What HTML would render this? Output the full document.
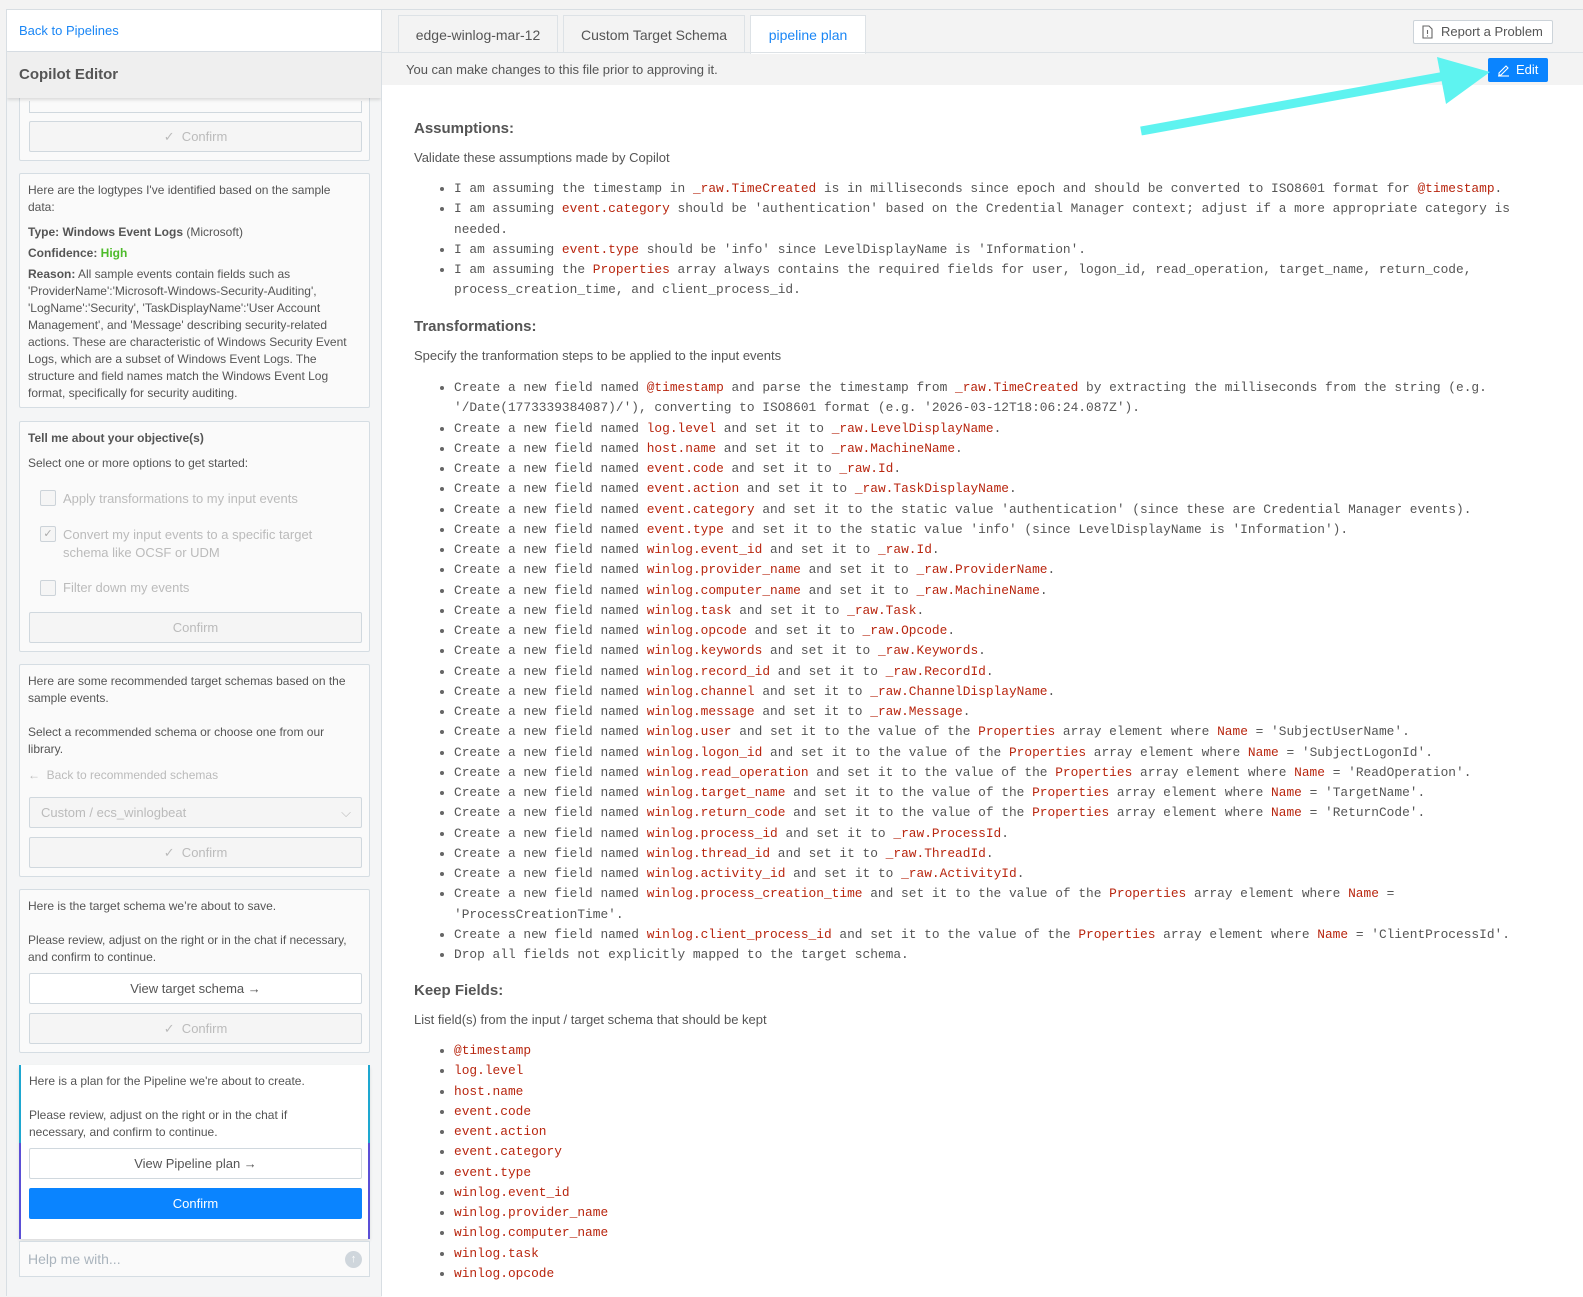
<!DOCTYPE html>
<html><head><meta charset="utf-8">
<style>
*{box-sizing:border-box;margin:0;padding:0}
body{width:1583px;height:1296px;overflow:hidden;background:#f3f3f3;font-family:"Liberation Sans",sans-serif;color:#555;position:relative}
.abs{position:absolute}
#left{position:absolute;left:6px;top:9px;width:376px;height:1287px;background:#f4f5f6;border-left:1px solid #d8dee3;border-right:1px solid #d8dee3;border-top:1px solid #d8dee3;overflow:hidden}
.card{position:absolute;left:12px;width:351px;background:#fafafa;border:1px solid #d5dde3;border-radius:2px;font-size:12px;line-height:17px;color:#555;padding:0 8px}
.btn{position:absolute;left:9px;width:333px;height:31px;border:1px solid #d0d8de;background:#f5f5f5;color:#bbb;font-size:13px;text-align:center;line-height:29px;border-radius:2px}
.btnw{background:#fff;color:#555}
.t{position:absolute;left:8px;white-space:nowrap}
.cb{position:absolute;left:20px;width:16px;height:16px;border:1px solid #ccd3d9;border-radius:2px;background:#f5f5f5}
#right{position:absolute;left:382px;top:9px;width:1201px;height:1287px;border-top:1px solid #d8dee3}
.tab{position:absolute;top:5px;height:38px;border:1px solid #dde2e6;border-bottom:none;background:#f3f3f3;font-size:14px;line-height:38px;text-align:center;color:#555}
#content{position:absolute;left:0;top:75px;width:1201px;height:1212px;background:#fff}
h3{position:absolute;left:32px;font-size:15px;font-weight:bold;color:#555}
.sub{position:absolute;left:32px;font-size:13px;color:#555}
ul{position:absolute;left:54px;width:1120px;list-style:none;font-family:"Liberation Mono",monospace;font-size:12.85px;line-height:20.25px;color:#555}
ul li{position:relative;padding-left:18px}
ul li:before{content:"";position:absolute;left:4px;top:8px;width:4px;height:4px;border-radius:50%;background:#666}
.c{color:#b8260f}
</style></head><body>

<div id="left">
  <div class="abs" style="left:0;top:0;width:374px;height:42px;background:#fff;border-bottom:1px solid #d8dee3"></div>
  <div class="abs" style="left:12px;top:13px;font-size:13px;color:#1a86f5">Back to Pipelines</div>
  <div class="abs" style="left:0;top:42px;width:374px;height:46px;background:#efefef;box-shadow:0 2px 3px rgba(0,0,0,.12);z-index:2"></div>
  <div class="abs" style="left:12px;top:56px;font-size:15px;font-weight:bold;color:#555;z-index:3">Copilot Editor</div>

  <div class="card" style="top:60px;height:91px">
    <div class="abs" style="left:9px;top:30px;width:333px;height:12px;border:1px solid #d0d8de;border-top:none"></div>
    <div class="btn" style="top:50px">✓&nbsp; Confirm</div>
  </div>

  <div class="card" style="top:163px;height:235px">
    <div class="t" style="top:8px">Here are the logtypes I've identified based on the sample</div>
    <div class="t" style="top:25px">data:</div>
    <div class="t" style="top:50px"><b>Type: Windows Event Logs</b> (Microsoft)</div>
    <div class="t" style="top:71px"><b>Confidence: <span style="color:#4dbb2a">High</span></b></div>
    <div class="t" style="top:92px;line-height:17px"><b>Reason:</b> All sample events contain fields such as<br>'ProviderName':'Microsoft-Windows-Security-Auditing',<br>'LogName':'Security', 'TaskDisplayName':'User Account<br>Management', and 'Message' describing security-related<br>actions. These are characteristic of Windows Security Event<br>Logs, which are a subset of Windows Event Logs. The<br>structure and field names match the Windows Event Log<br>format, specifically for security auditing.</div>
  </div>

  <div class="card" style="top:411px;height:231px">
    <div class="t" style="top:8px"><b>Tell me about your objective(s)</b></div>
    <div class="t" style="top:33px">Select one or more options to get started:</div>
    <div class="cb" style="top:68px"></div><div class="t" style="left:43px;top:68px;color:#bbb;font-size:13px">Apply transformations to my input events</div>
    <div class="cb" style="top:104px;color:#aaa;font-size:11px;line-height:14px;text-align:center">✓</div><div class="t" style="left:43px;top:104px;color:#bbb;font-size:13px;line-height:18px">Convert my input events to a specific target<br>schema like OCSF or UDM</div>
    <div class="cb" style="top:158px"></div><div class="t" style="left:43px;top:157px;color:#bbb;font-size:13px">Filter down my events</div>
    <div class="btn" style="top:190px">Confirm</div>
  </div>

  <div class="card" style="top:654px;height:213px">
    <div class="t" style="top:8px">Here are some recommended target schemas based on the<br>sample events.</div>
    <div class="t" style="top:59px">Select a recommended schema or choose one from our<br>library.</div>
    <div class="t" style="top:102px;color:#bbb">←&nbsp; Back to recommended schemas</div>
    <div class="btn" style="top:132px;text-align:left;padding-left:11px">Custom / ecs_winlogbeat<span style="position:absolute;right:10px;top:0;color:#bbb">⌵</span></div>
    <div class="btn" style="top:172px">✓&nbsp; Confirm</div>
  </div>

  <div class="card" style="top:879px;height:164px">
    <div class="t" style="top:8px">Here is the target schema we’re about to save.</div>
    <div class="t" style="top:42px">Please review, adjust on the right or in the chat if necessary,<br>and confirm to continue.</div>
    <div class="btn btnw" style="top:83px">View target schema →</div>
    <div class="btn" style="top:123px">✓&nbsp; Confirm</div>
  </div>

  <div class="card" style="top:1055px;height:174px;background:#fff;border:none;border-left:2px solid;border-right:2px solid;border-image:linear-gradient(#1ea7d0 45%,#5b4fd6 45%) 1;box-shadow:0 2px 3px rgba(0,0,0,.1)">
    <div class="t" style="top:8px">Here is a plan for the Pipeline we're about to create.</div>
    <div class="t" style="top:42px">Please review, adjust on the right or in the chat if<br>necessary, and confirm to continue.</div>
    <div class="btn btnw" style="top:83px;left:8px">View Pipeline plan →</div>
    <div class="btn" style="top:123px;left:8px;background:#0a84ff;border-color:#0a84ff;color:#fff">Confirm</div>
  </div>

  <div class="abs" style="left:12px;top:1231px;width:351px;height:36px;border:1px solid #d5dde3;background:#fafafa;font-size:14px;color:#aab4bd;line-height:34px;padding-left:8px">Help me with...<span style="position:absolute;right:7px;top:9px;width:17px;height:17px;border-radius:50%;background:#cfd6dc;color:#fff;font-size:11px;line-height:17px;text-align:center">↑</span></div>
</div>

<div id="right">
  <div class="tab" style="left:16px;width:160px">edge-winlog-mar-12</div>
  <div class="tab" style="left:181px;width:182px">Custom Target Schema</div>
  <div class="tab" style="left:368px;width:116px;background:#fff;color:#1a86f5;height:39px">pipeline plan</div>
  <div class="abs" style="left:0;top:42px;width:1201px;height:1px;background:#dde2e6"></div>
  <div class="abs" style="left:1031px;top:10px;width:140px;height:24px;border:1px solid #ccd3d9;background:#fff;font-size:13px;line-height:22px;padding-left:27px;color:#555;border-radius:2px">
    <svg style="position:absolute;left:8px;top:4px" width="11" height="14" viewBox="0 0 11 14"><path d="M1 1h6l3 3v9H1z" fill="none" stroke="#666" stroke-width="1.1"/><path d="M5.5 5v4M5.5 10.5v1" stroke="#666" stroke-width="1.1"/></svg>Report a Problem</div>
  <div class="abs" style="left:24px;top:52px;font-size:13px;color:#555">You can make changes to this file prior to approving it.</div>
  <div class="abs" style="left:1106px;top:48px;width:60px;height:24px;background:#0a84ff;border-radius:2px;color:#fff;font-size:13px;line-height:24px;padding-left:28px">
    <svg style="position:absolute;left:9px;top:5px" width="13" height="14" viewBox="0 0 13 14"><path d="M2 10l7-7 2 2-7 7H2z" fill="none" stroke="#fff" stroke-width="1.1"/><path d="M1 13h11" stroke="#fff" stroke-width="1.1"/></svg>Edit</div>

  <div id="content">
    <h3 style="top:35px">Assumptions:</h3>
    <div class="sub" style="top:65px">Validate these assumptions made by Copilot</div>
    <ul style="top:94px">
      <li>I am assuming the timestamp in <span class="c">_raw.TimeCreated</span> is in milliseconds since epoch and should be converted to ISO8601 format for <span class="c">@timestamp</span>.</li>
      <li>I am assuming <span class="c">event.category</span> should be 'authentication' based on the Credential Manager context; adjust if a more appropriate category is needed.</li>
      <li>I am assuming <span class="c">event.type</span> should be 'info' since LevelDisplayName is 'Information'.</li>
      <li>I am assuming the <span class="c">Properties</span> array always contains the required fields for user, logon_id, read_operation, target_name, return_code, process_creation_time, and client_process_id.</li>
    </ul>
    <h3 style="top:233px">Transformations:</h3>
    <div class="sub" style="top:263px">Specify the tranformation steps to be applied to the input events</div>
    <ul style="top:293px">
      <li>Create a new field named <span class="c">@timestamp</span> and parse the timestamp from <span class="c">_raw.TimeCreated</span> by extracting the milliseconds from the string (e.g. '/Date(1773339384087)/'), converting to ISO8601 format (e.g. '2026-03-12T18:06:24.087Z').</li>
      <li>Create a new field named <span class="c">log.level</span> and set it to <span class="c">_raw.LevelDisplayName</span>.</li>
      <li>Create a new field named <span class="c">host.name</span> and set it to <span class="c">_raw.MachineName</span>.</li>
      <li>Create a new field named <span class="c">event.code</span> and set it to <span class="c">_raw.Id</span>.</li>
      <li>Create a new field named <span class="c">event.action</span> and set it to <span class="c">_raw.TaskDisplayName</span>.</li>
      <li>Create a new field named <span class="c">event.category</span> and set it to the static value 'authentication' (since these are Credential Manager events).</li>
      <li>Create a new field named <span class="c">event.type</span> and set it to the static value 'info' (since LevelDisplayName is 'Information').</li>
      <li>Create a new field named <span class="c">winlog.event_id</span> and set it to <span class="c">_raw.Id</span>.</li>
      <li>Create a new field named <span class="c">winlog.provider_name</span> and set it to <span class="c">_raw.ProviderName</span>.</li>
      <li>Create a new field named <span class="c">winlog.computer_name</span> and set it to <span class="c">_raw.MachineName</span>.</li>
      <li>Create a new field named <span class="c">winlog.task</span> and set it to <span class="c">_raw.Task</span>.</li>
      <li>Create a new field named <span class="c">winlog.opcode</span> and set it to <span class="c">_raw.Opcode</span>.</li>
      <li>Create a new field named <span class="c">winlog.keywords</span> and set it to <span class="c">_raw.Keywords</span>.</li>
      <li>Create a new field named <span class="c">winlog.record_id</span> and set it to <span class="c">_raw.RecordId</span>.</li>
      <li>Create a new field named <span class="c">winlog.channel</span> and set it to <span class="c">_raw.ChannelDisplayName</span>.</li>
      <li>Create a new field named <span class="c">winlog.message</span> and set it to <span class="c">_raw.Message</span>.</li>
      <li>Create a new field named <span class="c">winlog.user</span> and set it to the value of the <span class="c">Properties</span> array element where <span class="c">Name</span> = 'SubjectUserName'.</li>
      <li>Create a new field named <span class="c">winlog.logon_id</span> and set it to the value of the <span class="c">Properties</span> array element where <span class="c">Name</span> = 'SubjectLogonId'.</li>
      <li>Create a new field named <span class="c">winlog.read_operation</span> and set it to the value of the <span class="c">Properties</span> array element where <span class="c">Name</span> = 'ReadOperation'.</li>
      <li>Create a new field named <span class="c">winlog.target_name</span> and set it to the value of the <span class="c">Properties</span> array element where <span class="c">Name</span> = 'TargetName'.</li>
      <li>Create a new field named <span class="c">winlog.return_code</span> and set it to the value of the <span class="c">Properties</span> array element where <span class="c">Name</span> = 'ReturnCode'.</li>
      <li>Create a new field named <span class="c">winlog.process_id</span> and set it to <span class="c">_raw.ProcessId</span>.</li>
      <li>Create a new field named <span class="c">winlog.thread_id</span> and set it to <span class="c">_raw.ThreadId</span>.</li>
      <li>Create a new field named <span class="c">winlog.activity_id</span> and set it to <span class="c">_raw.ActivityId</span>.</li>
      <li>Create a new field named <span class="c">winlog.process_creation_time</span> and set it to the value of the <span class="c">Properties</span> array element where <span class="c">Name</span> = 'ProcessCreationTime'.</li>
      <li>Create a new field named <span class="c">winlog.client_process_id</span> and set it to the value of the <span class="c">Properties</span> array element where <span class="c">Name</span> = 'ClientProcessId'.</li>
      <li>Drop all fields not explicitly mapped to the target schema.</li>
    </ul>
    <h3 style="top:897px">Keep Fields:</h3>
    <div class="sub" style="top:927px">List field(s) from the input / target schema that should be kept</div>
    <ul style="top:956px">
      <li class="c">@timestamp</li><li class="c">log.level</li><li class="c">host.name</li><li class="c">event.code</li><li class="c">event.action</li><li class="c">event.category</li><li class="c">event.type</li><li class="c">winlog.event_id</li><li class="c">winlog.provider_name</li><li class="c">winlog.computer_name</li><li class="c">winlog.task</li><li class="c">winlog.opcode</li>
    </ul>
  </div>
</div>

<svg class="abs" style="left:0;top:0" width="1583" height="1296" viewBox="0 0 1583 1296">
  <path d="M1141 131 L1445 76" stroke="#5ef3f0" stroke-width="9" fill="none"/>
  <path d="M1437 57 L1490 72 L1446 104 Z" fill="#5ef3f0"/>
</svg>
</body></html>
